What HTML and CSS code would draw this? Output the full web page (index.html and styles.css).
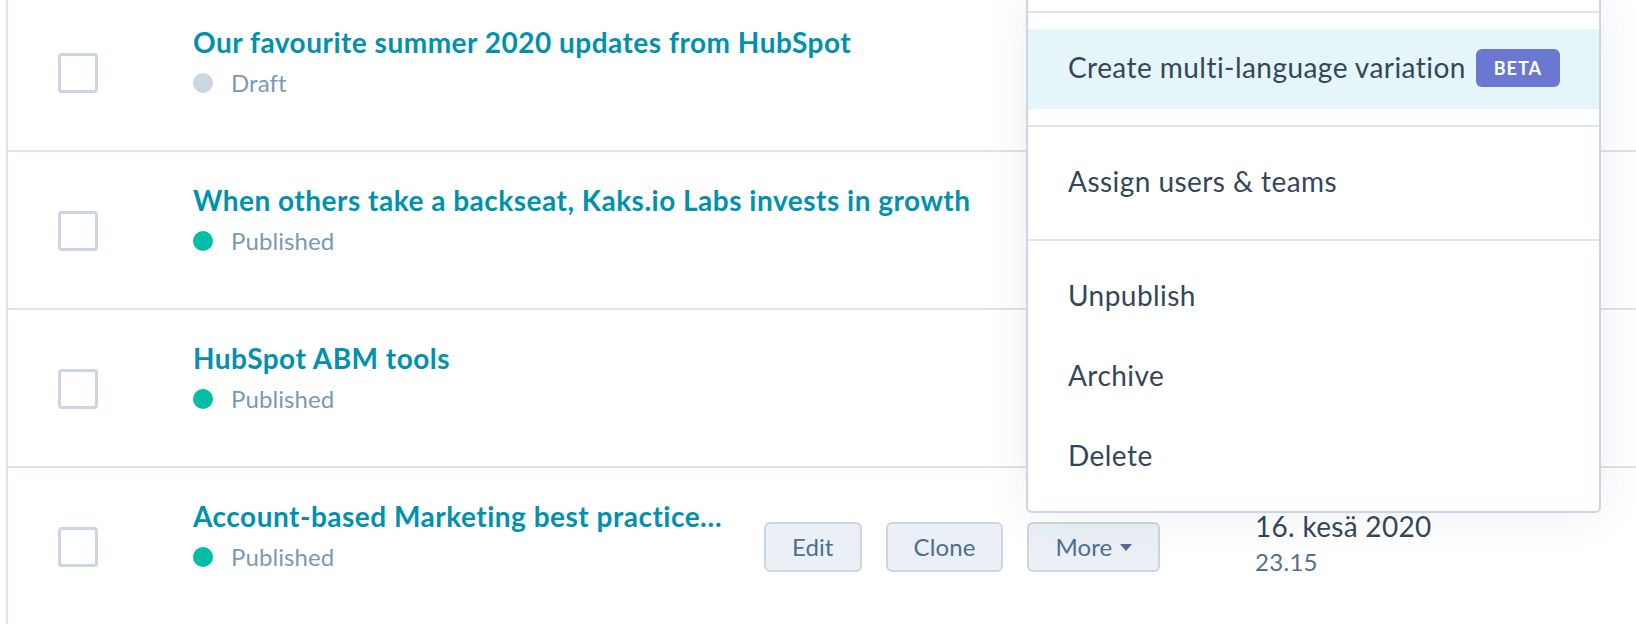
FILE: index.html
```html
<!DOCTYPE html>
<html lang="en">
<head>
<meta charset="utf-8">
<title>Blog posts</title>
<link rel="stylesheet" href="styles.css">
</head>
<body>
<div class="page">
  <div class="table">
    <div class="row">
      <div class="check-cell"><span class="checkbox"></span></div>
      <div class="name-cell">
        <a class="title">Our favourite summer 2020 updates from HubSpot</a>
        <div class="status"><span class="dot draft"></span>Draft</div>
      </div>
    </div>
    <div class="row">
      <div class="check-cell"><span class="checkbox"></span></div>
      <div class="name-cell">
        <a class="title">When others take a backseat, Kaks.io Labs invests in growth</a>
        <div class="status"><span class="dot published"></span>Published</div>
      </div>
    </div>
    <div class="row">
      <div class="check-cell"><span class="checkbox"></span></div>
      <div class="name-cell">
        <a class="title">HubSpot ABM tools</a>
        <div class="status"><span class="dot published"></span>Published</div>
      </div>
    </div>
    <div class="row">
      <div class="check-cell"><span class="checkbox"></span></div>
      <div class="name-cell hover">
        <div class="name-main">
          <a class="title">Account-based Marketing best practice…</a>
          <div class="status"><span class="dot published"></span>Published</div>
        </div>
        <div class="actions">
          <button class="btn">Edit</button>
          <button class="btn">Clone</button>
          <button class="btn">More<span class="caret"></span></button>
        </div>
      </div>
      <div class="date-cell">
        <div class="date">16. kesä 2020</div>
        <div class="time">23.15</div>
      </div>
    </div>
  </div>

  <div class="menu">
    <div class="menu-top"></div>
    <div class="menu-section">
      <div class="menu-item active">Create multi-language variation<span class="badge">BETA</span></div>
    </div>
    <div class="menu-section">
      <div class="menu-item">Assign users &amp; teams</div>
    </div>
    <div class="menu-section">
      <div class="menu-item">Unpublish</div>
      <div class="menu-item">Archive</div>
      <div class="menu-item">Delete</div>
    </div>
  </div>
</div>
</body>
</html>
```

FILE: styles.css
```css
html, body {
  margin: 0;
  padding: 0;
  background: #ffffff;
  overflow: hidden;
}

body {
  font-family: "Lato", "Liberation Sans", sans-serif;
  color: #33475b;
}

.page {
  position: relative;
  width: 1636px;
  height: 624px;
  overflow: hidden;
}

.table {
  margin-left: 6px;
  margin-top: -6px;
  border-left: 2px solid #dfe3eb;
}

.row {
  display: flex;
  align-items: flex-start;
  height: 156px;
  border-bottom: 2px solid #dfe3eb;
}

.check-cell {
  flex: none;
  padding-left: 50px;
  padding-top: 59px;
}

.checkbox {
  display: block;
  width: 34px;
  height: 34px;
  border: 3px solid #cbd6e2;
  border-radius: 4px;
  background: #ffffff;
}

.name-cell {
  flex: none;
  width: 1062px;
  margin-left: 95px;
  padding-top: 28px;
}

.name-cell.hover {
  display: flex;
  align-items: flex-start;
}

.name-main {
  flex: none;
  width: 540px;
}

.title {
  display: block;
  font-size: 28px;
  line-height: 40px;
  font-weight: 700;
  letter-spacing: 0.5px;
  color: #0091ae;
  white-space: nowrap;
  text-decoration: none;
}

.status {
  display: flex;
  align-items: center;
  margin-top: 3px;
  font-size: 24px;
  line-height: 36px;
  letter-spacing: 0.1px;
  color: #7c98b6;
}

.dot {
  flex: none;
  width: 20px;
  height: 20px;
  border-radius: 50%;
  margin-right: 18px;
}

.dot.draft {
  background: #cbd6e2;
}

.dot.published {
  background: #00bda5;
}

.actions {
  display: flex;
  gap: 24px;
  margin-left: 31px;
  padding-top: 26px;
}

.btn {
  display: flex;
  align-items: center;
  height: 50px;
  padding: 0 26px;
  border: 2px solid #cbd6e2;
  border-radius: 6px;
  background: #eaf0f6;
  color: #506e91;
  font-family: "Lato", "Liberation Sans", sans-serif;
  font-size: 24px;
  line-height: 46px;
  letter-spacing: 0.1px;
}

.caret {
  display: inline-block;
  width: 0;
  height: 0;
  margin-left: 8px;
  border-left: 6px solid transparent;
  border-right: 6px solid transparent;
  border-top: 7px solid #506e91;
}

.date-cell {
  flex: none;
  padding-top: 38px;
}

.date {
  font-size: 28px;
  line-height: 40px;
  letter-spacing: 0.3px;
  color: #33475b;
}

.time {
  font-size: 24px;
  line-height: 32px;
  letter-spacing: 0.3px;
  color: #516f90;
}

.menu {
  position: absolute;
  left: 1026px;
  top: -2px;
  width: 571px;
  background: #ffffff;
  border: 2px solid #cbd6e2;
  border-radius: 0 0 6px 6px;
  box-shadow: 0 0 48px rgba(45, 62, 80, 0.09);
}

.menu-top {
  height: 11px;
}

.menu-section {
  border-top: 2px solid #dfe3eb;
  padding: 16px 0;
}

.menu-section:last-child {
  padding-bottom: 14px;
}

.menu-item {
  display: flex;
  align-items: center;
  height: 80px;
  padding-left: 40px;
  padding-bottom: 5px;
  box-sizing: border-box;
  font-size: 28px;
  letter-spacing: 0.45px;
  color: #33475b;
}

.menu-item.active {
  background: #e5f5f8;
}

.badge {
  display: inline-flex;
  align-items: center;
  justify-content: center;
  width: 84px;
  height: 38px;
  margin-left: 10px;
  margin-top: 2px;
  border-radius: 6px;
  background: #6a78d1;
  color: #ffffff;
  font-size: 18px;
  font-weight: 700;
  letter-spacing: 1px;
}
```
